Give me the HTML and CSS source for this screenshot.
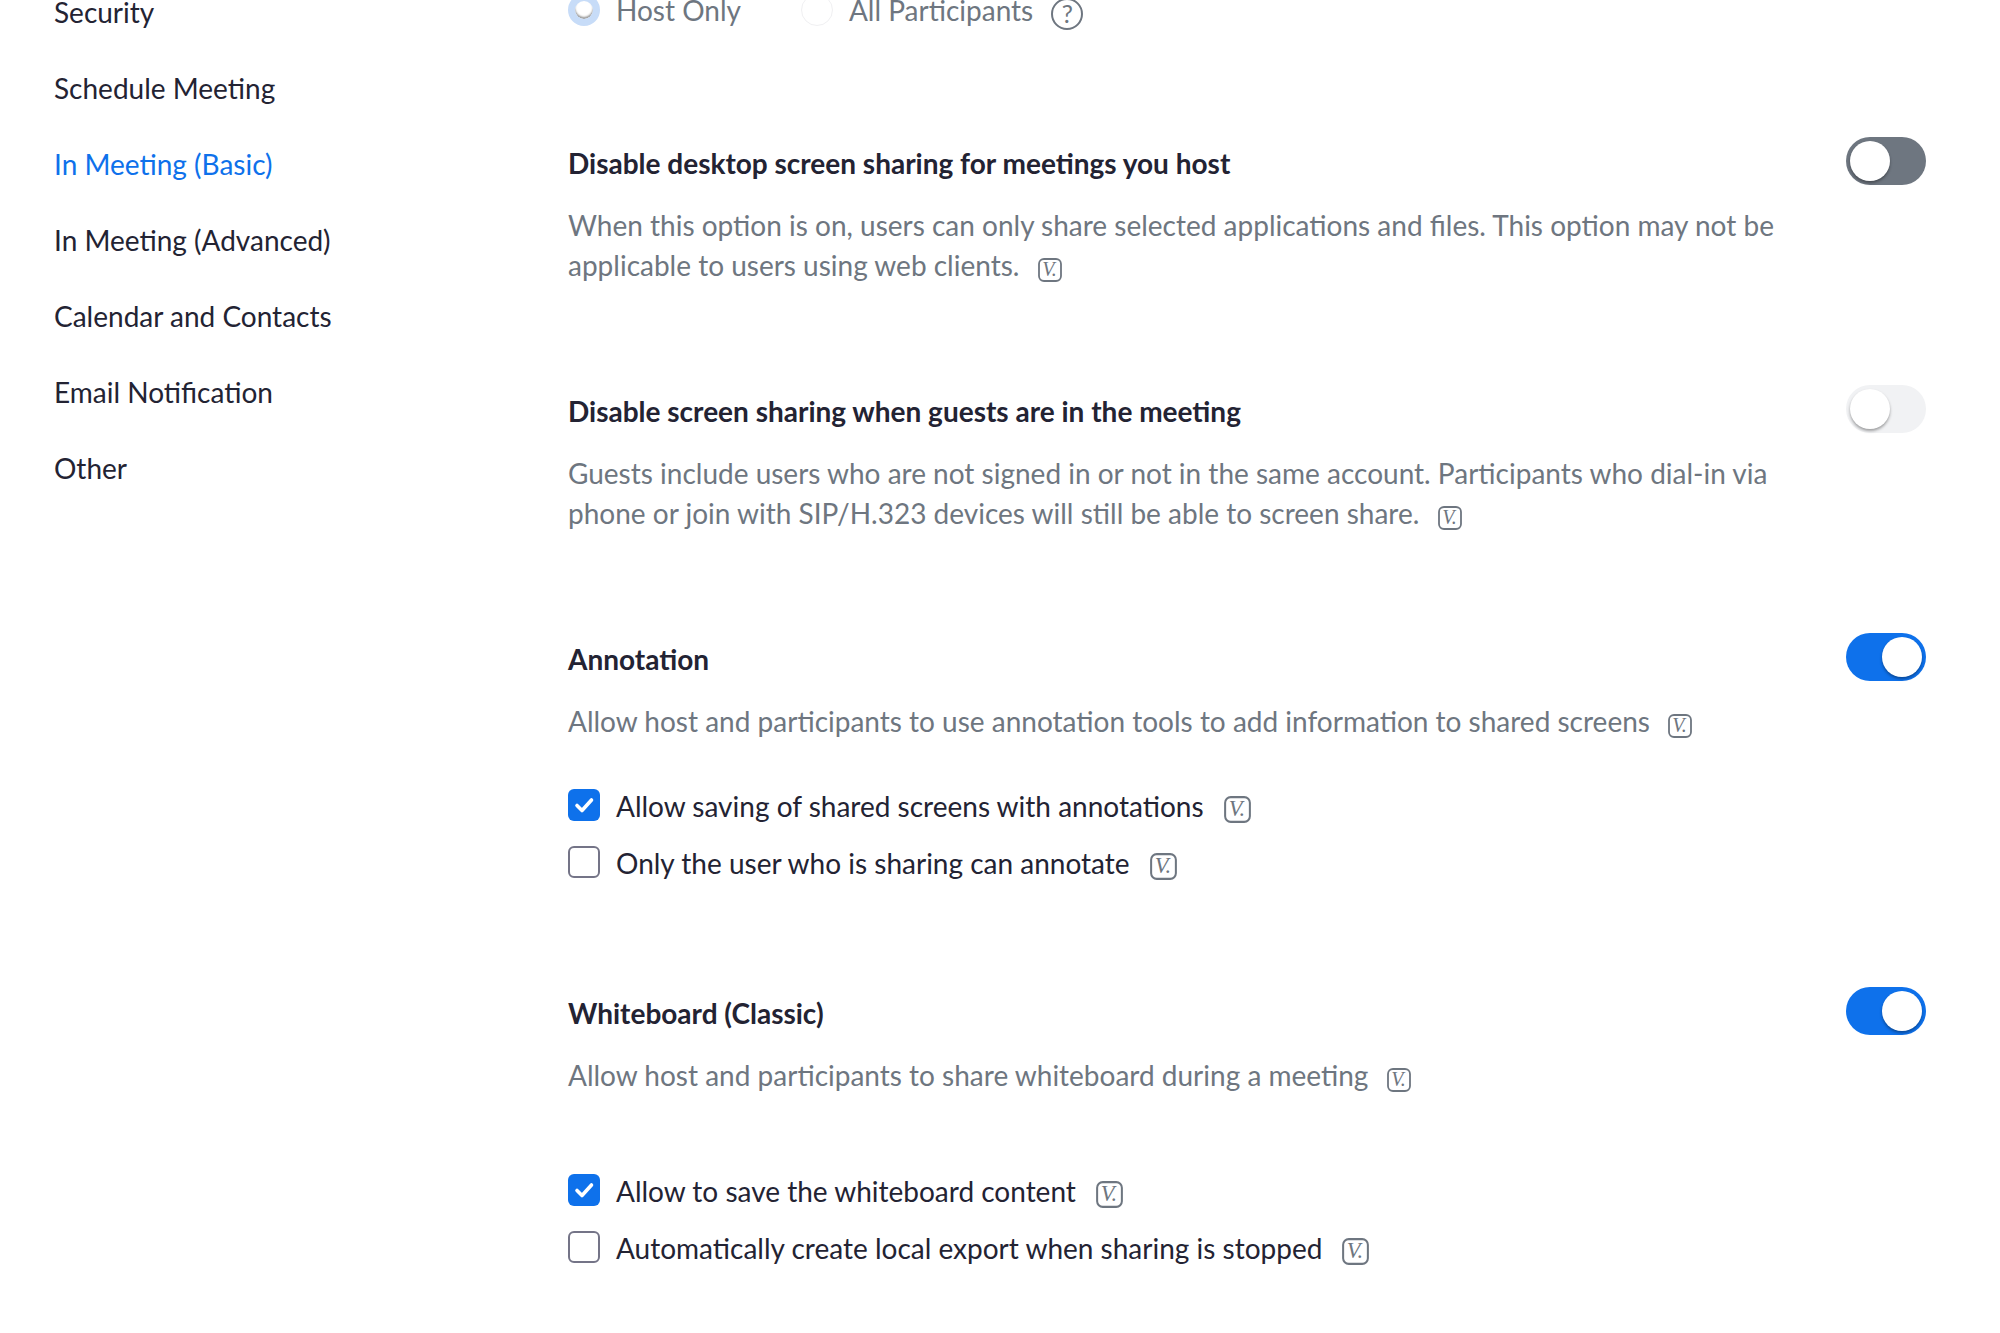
FILE: index.html
```html
<!DOCTYPE html>
<html lang="en">
<head>
  <meta charset="UTF-8">
  <title>Settings</title>
  <link rel="stylesheet" href="styles.css">
</head>
<body>
  <svg class="defs" width="0" height="0">
    <symbol id="vip" viewBox="0 0 24 24">
      <rect x="1" y="1" width="22" height="22" rx="5" fill="none" stroke="#6e7680" stroke-width="1.8"/>
      <text x="11.500" y="18" text-anchor="middle" class="vip-text">V.</text>
    </symbol>
  </svg>
  <div class="page">
    <nav class="sidebar">
      <a href="#">Security</a>
      <a href="#">Schedule Meeting</a>
      <a href="#" class="active">In Meeting (Basic)</a>
      <a href="#">In Meeting (Advanced)</a>
      <a href="#">Calendar and Contacts</a>
      <a href="#">Email Notification</a>
      <a href="#">Other</a>
    </nav>
    <main class="main">
      <div class="radios">
        <label class="radio-item"><span class="radio on"></span>Host Only</label>
        <label class="radio-item"><span class="radio"></span>All Participants</label>
        <span class="help">?</span>
      </div>

      <section class="setting first">
        <div class="setting-head">
          <h3>Disable desktop screen sharing for meetings you host</h3>
          <span class="toggle dark"><i></i></span>
        </div>
        <p class="desc">When this option is on, users can only share selected applications and files. This option may not be applicable to users using web clients. <svg class="vip"><use href="#vip"/></svg></p>
      </section>

      <section class="setting">
        <div class="setting-head">
          <h3>Disable screen sharing when guests are in the meeting</h3>
          <span class="toggle"><i></i></span>
        </div>
        <p class="desc">Guests include users who are not signed in or not in the same account. Participants who dial-in via phone or join with SIP/H.323 devices will still be able to screen share. <svg class="vip"><use href="#vip"/></svg></p>
      </section>

      <section class="setting annotation">
        <div class="setting-head">
          <h3>Annotation</h3>
          <span class="toggle on"><i></i></span>
        </div>
        <p class="desc">Allow host and participants to use annotation tools to add information to shared screens <svg class="vip"><use href="#vip"/></svg></p>
        <div class="checks">
          <label class="check-row"><span class="check on"><svg viewBox="0 0 32 32"><path d="M9 16.5l5 5 9.500-10.500" fill="none" stroke="#fff" stroke-width="3.600" stroke-linecap="round" stroke-linejoin="round"/></svg></span><span class="check-label">Allow saving of shared screens with annotations</span><svg class="vip big"><use href="#vip"/></svg></label>
          <label class="check-row"><span class="check"></span><span class="check-label">Only the user who is sharing can annotate</span><svg class="vip big"><use href="#vip"/></svg></label>
        </div>
      </section>

      <section class="setting">
        <div class="setting-head">
          <h3>Whiteboard (Classic)</h3>
          <span class="toggle on"><i></i></span>
        </div>
        <p class="desc">Allow host and participants to share whiteboard during a meeting <svg class="vip"><use href="#vip"/></svg></p>
        <div class="checks wide">
          <label class="check-row"><span class="check on"><svg viewBox="0 0 32 32"><path d="M9 16.5l5 5 9.500-10.500" fill="none" stroke="#fff" stroke-width="3.600" stroke-linecap="round" stroke-linejoin="round"/></svg></span><span class="check-label">Allow to save the whiteboard content</span><svg class="vip big"><use href="#vip"/></svg></label>
          <label class="check-row"><span class="check"></span><span class="check-label">Automatically create local export when sharing is stopped</span><svg class="vip big"><use href="#vip"/></svg></label>
        </div>
      </section>
    </main>
  </div>
</body>
</html>
```

FILE: styles.css
```css
html, body {
  margin: 0;
  height: 1333px;
  overflow: hidden;
  background: #fff;
}
body {
  font-family: Lato, "Open Sans", sans-serif;
  font-size: 28px;
  color: #232333;
}
.defs {
  display: block;
  height: 0;
}
.vip-text {
  font-family: "Liberation Serif", serif;
  font-style: italic;
  font-size: 20px;
  fill: #6e7680;
}
.page {
  display: flex;
  margin-top: -26px;
}
.sidebar {
  width: 568px;
  padding-left: 54px;
  box-sizing: border-box;
  display: flex;
  flex-direction: column;
  flex-shrink: 0;
}
.sidebar a {
  height: 76px;
  line-height: 76px;
  color: #232333;
  text-decoration: none;
}
.sidebar a.active {
  color: #0e71eb;
}
.main {
  width: 1358px;
}
.radios {
  display: flex;
  align-items: center;
  height: 76px;
  margin-top: -2px;
  color: #6e7680;
}
.radio-item {
  display: flex;
  align-items: center;
  gap: 16px;
  margin-right: 60px;
}
.radio {
  width: 32px;
  height: 32px;
  box-sizing: border-box;
  border-radius: 50%;
  border: 1px solid #f0f0f2;
  background: #fff;
}
.radio.on {
  border: 7px solid #c7dcf8;
  box-shadow: inset 0 -2px 2px rgba(0, 0, 0, .4);
}
.radio-item + .radio-item {
  margin-right: 18px;
}
.help {
  width: 32px;
  height: 32px;
  box-sizing: border-box;
  border: 2.500px solid #6e7680;
  border-radius: 50%;
  font-size: 25px;
  line-height: 27px;
  text-align: center;
  margin-top: 7px;
}
.setting {
  padding-bottom: 102px;
}
.setting.first {
  padding-top: 91px;
}
.setting.annotation {
  padding-bottom: 105px;
}
.setting-head {
  display: flex;
  justify-content: space-between;
  align-items: center;
  height: 48px;
}
.setting-head h3 {
  margin: 0;
  font-size: 28px;
  font-weight: 700;
  color: #232333;
}
.toggle {
  width: 80px;
  height: 48px;
  box-sizing: border-box;
  padding: 4px;
  border-radius: 24px;
  background: #f1f2f4;
  display: flex;
  margin-top: -5px;
}
.toggle i {
  width: 40px;
  height: 40px;
  border-radius: 50%;
  background: #fff;
  box-shadow: 0 2px 3px rgba(0, 0, 0, .35);
}
.toggle.dark {
  background: #6e7680;
}
.toggle.on {
  background: #0e71eb;
  justify-content: flex-end;
}
.desc {
  margin: 18px 0 0;
  width: 1246px;
  line-height: 40px;
  color: #6e7680;
}
.vip {
  width: 24px;
  height: 24px;
  margin-left: 11px;
  vertical-align: -6px;
}
.vip.big {
  width: 27px;
  height: 27px;
  vertical-align: -7px;
}
.checks {
  margin-top: 46px;
  display: flex;
  flex-direction: column;
  gap: 17px;
}
.checks.wide {
  margin-top: 77px;
}
.check-row {
  display: flex;
  align-items: center;
  height: 40px;
}
.check-label {
  margin-top: -2px;
}
.check-row .vip {
  margin-top: 4px;
  margin-left: 20px;
}
.check {
  width: 32px;
  height: 32px;
  box-sizing: border-box;
  border: 2px solid #747487;
  border-radius: 6px;
  margin-right: 16px;
  flex-shrink: 0;
  margin-top: -4px;
}
.check.on {
  border: 0;
  background: #0e71eb;
}
.check svg {
  display: block;
}
```
